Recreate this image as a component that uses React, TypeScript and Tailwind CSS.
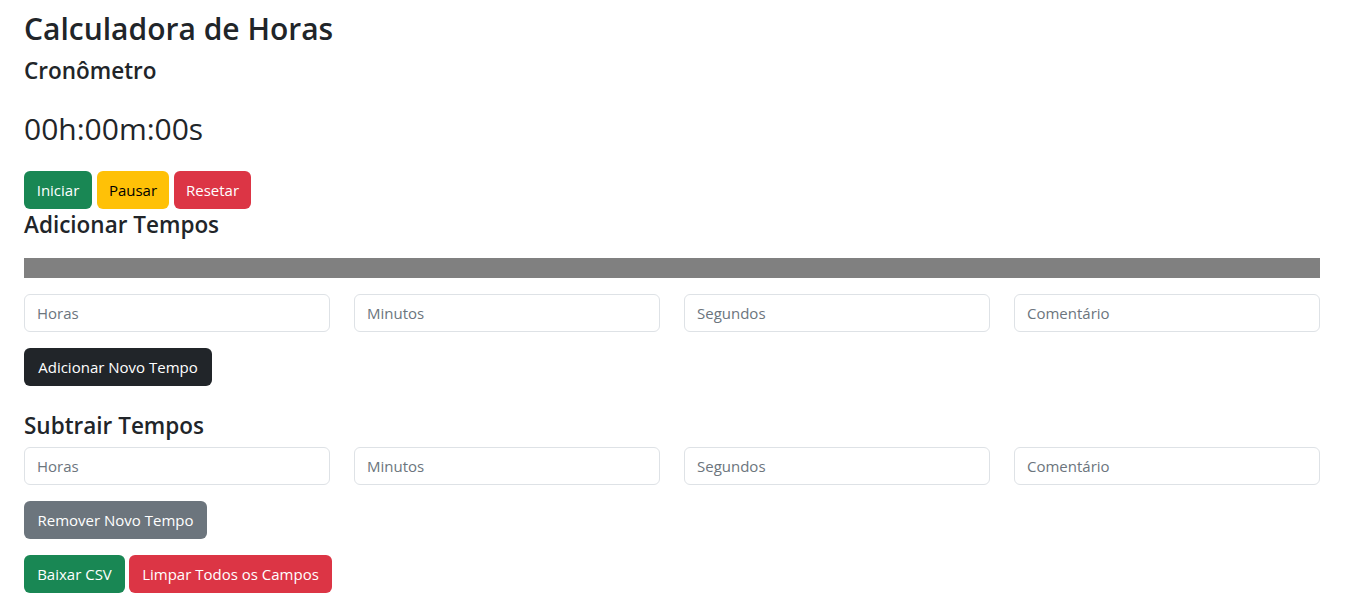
import React from "react";

const font = { fontFamily: '"Segoe UI", "Open Sans", "Liberation Sans", sans-serif' };

const Btn = ({ label, color, w }: { label: string; color: string; w: string }) => (
  <button className={`${color} ${w} h-[38px] rounded-[6px] text-[15px] leading-[24px] text-center whitespace-nowrap`}>
    {label}
  </button>
);

const Inputs = () => (
  <div className="grid grid-cols-4 gap-6">
    {["Horas", "Minutos", "Segundos", "Comentário"].map((p) => (
      <input
        key={p}
        placeholder={p}
        className="h-[38px] w-full rounded-[6px] border border-[#dee2e6] bg-white px-3 text-[15px] text-[#212529] placeholder:text-[#6c757d] outline-none"
      />
    ))}
  </div>
);

export default function App() {
  return (
    <div style={font} className="min-h-screen bg-white text-[#212529]">
      <div className="w-[1296px] ml-6 pt-[10px]">
        <h1 className="text-[30px] font-semibold leading-[38px]">Calculadora de Horas</h1>
        <h4 className="mt-2 text-[22.5px] font-semibold leading-[29px]">Cronômetro</h4>
        <div className="mt-[24px] text-[30px] leading-[40px]">00h:00m:00s</div>

        <div className="mt-[22px] flex gap-[5px]">
          <Btn label="Iniciar" color="bg-[#198754] text-white" w="w-[68px]" />
          <Btn label="Pausar" color="bg-[#ffc107] text-black" w="w-[72px]" />
          <Btn label="Resetar" color="bg-[#dc3545] text-white" w="w-[77px]" />
        </div>

        <h4 className="mt-[1px] text-[22.5px] font-semibold leading-[29px]">Adicionar Tempos</h4>
        <div className="mt-[19px] h-5 bg-[#808080]" />

        <div className="mt-4">
          <Inputs />
        </div>
        <div className="mt-4">
          <Btn label="Adicionar Novo Tempo" color="bg-[#212529] text-white" w="w-[188px]" />
        </div>

        <h4 className="mt-[25px] text-[22.5px] font-semibold leading-[29px]">Subtrair Tempos</h4>
        <div className="mt-[7px]">
          <Inputs />
        </div>
        <div className="mt-4">
          <Btn label="Remover Novo Tempo" color="bg-[#6c757d] text-white" w="w-[183px]" />
        </div>
        <div className="mt-4 flex gap-[4px]">
          <Btn label="Baixar CSV" color="bg-[#198754] text-white" w="w-[101px]" />
          <Btn label="Limpar Todos os Campos" color="bg-[#dc3545] text-white" w="w-[203px]" />
        </div>
      </div>
    </div>
  );
}
